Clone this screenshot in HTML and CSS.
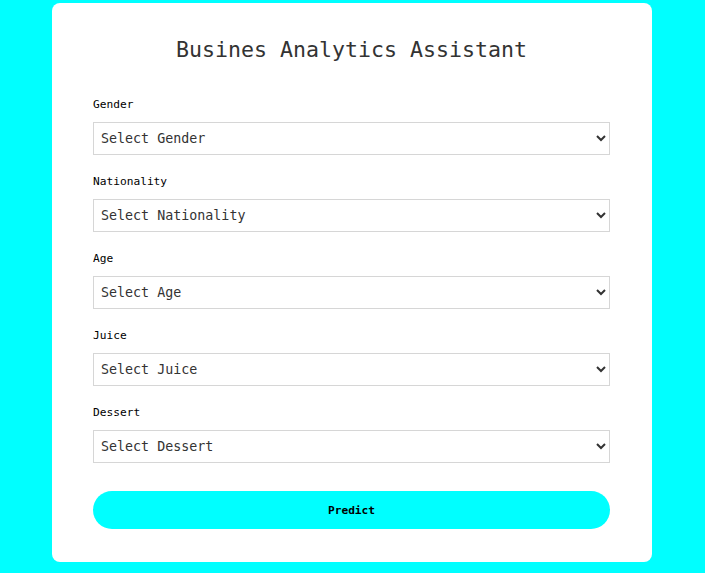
FILE: index.html
```html
<!DOCTYPE html>
<html lang="en">
<head>
    <meta charset="UTF-8">
    <meta name="viewport" content="width=device-width, initial-scale=1.0">
    <title>Busines Analytics Assistant</title>
    <link rel="stylesheet" href="styles.css">
</head>
<body>
    <div class="container">
        <h1>Busines Analytics Assistant</h1>

        <form class="predict-form">
            <div class="field">
                <label for="gender">Gender</label>
                <select id="gender">
                    <option>Select Gender</option>
                </select>
            </div>
            <div class="field">
                <label for="nationality">Nationality</label>
                <select id="nationality">
                    <option>Select Nationality</option>
                </select>
            </div>
            <div class="field">
                <label for="age">Age</label>
                <select id="age">
                    <option>Select Age</option>
                </select>
            </div>
            <div class="field">
                <label for="juice">Juice</label>
                <select id="juice">
                    <option>Select Juice</option>
                </select>
            </div>
            <div class="field">
                <label for="dessert">Dessert</label>
                <select id="dessert">
                    <option>Select Dessert</option>
                </select>
            </div>

            <button type="button" class="predict-btn">Predict</button>
        </form>
    </div>
</body>
</html>
```

FILE: styles.css
```css
body {
    font-family: "DejaVu Sans Mono", monospace;
    background-color: #00ffff;
    margin: 0;
    padding: 3px 1px 0 0;
    color: #333;
}
.container {
    width: 600px;
    box-sizing: border-box;
    margin: 0 auto;
    background: #fff;
    padding: 34px 42px 33px 41px;
    border-radius: 8px;
}
h1 {
    font-size: 21.6px;
    font-weight: normal;
    line-height: 26px;
    text-align: center;
    margin: 0 0 35px;
    color: #333;
}
.field {
    margin-bottom: 20px;
}
.field label {
    display: block;
    font-size: 11.2px;
    line-height: 13px;
    color: #000;
    margin-bottom: 11px;
}
.field select {
    display: block;
    width: 100%;
    height: 33px;
    padding: 0 3px;
    font-family: "DejaVu Sans Mono", monospace;
    font-size: 13.33px;
    color: #333;
    background: #fff;
    border: 1px solid #d6d6d6;
    border-radius: 0;
}
.predict-btn {
    display: block;
    width: 100%;
    height: 38px;
    margin-top: 28px;
    border: none;
    border-radius: 19px;
    background: #00ffff;
    color: #000;
    font-family: "DejaVu Sans Mono", monospace;
    font-size: 11.2px;
    font-weight: bold;
    cursor: pointer;
}
```
